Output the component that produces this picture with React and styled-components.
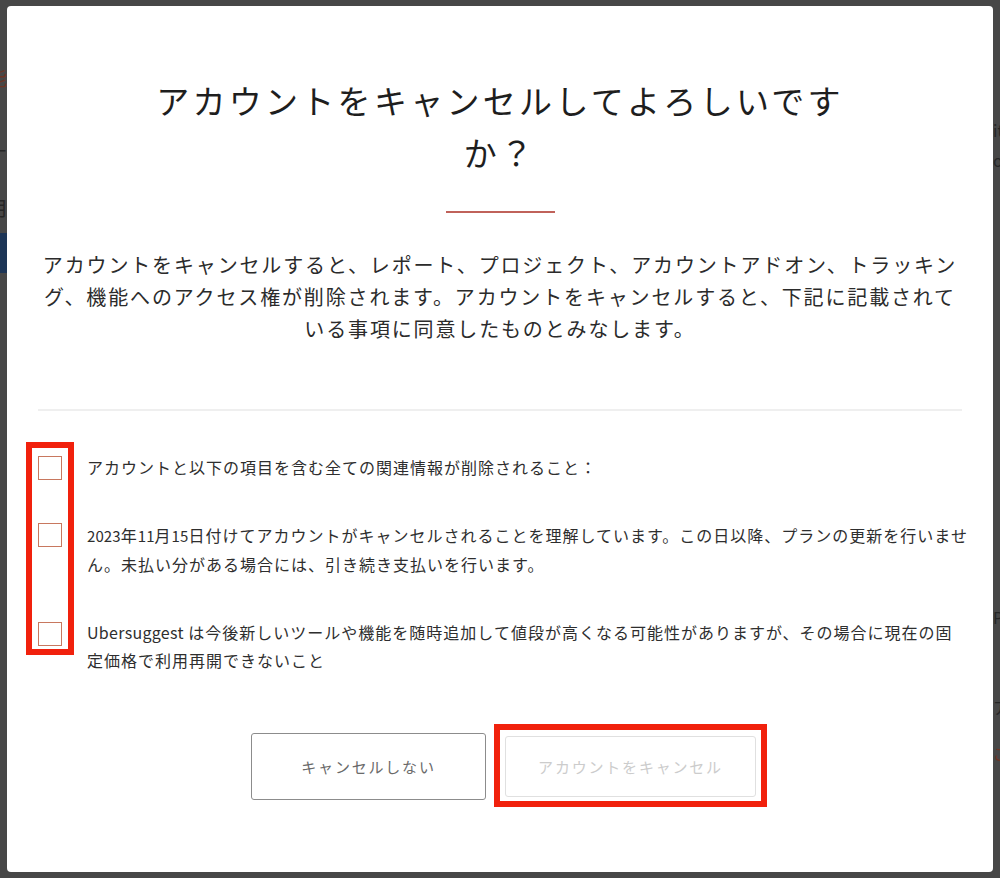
import React from "react";
import styled, { createGlobalStyle } from "styled-components";

const GlobalStyle = createGlobalStyle`
  html, body { margin: 0; padding: 0; background: #474747; }
  body { font-family: "Noto Sans CJK JP", "Noto Sans", sans-serif; }
  * { box-sizing: border-box; }
`;

const Backdrop = styled.div`
  width: 1000px;
  height: 878px;
  overflow: hidden;
  display: grid;
  grid-template-columns: 7px 986px 7px;
  background: #474747;
`;

const EdgeStrip = styled.div`
  height: 878px;
  overflow: hidden;
  display: flex;
  flex-direction: column;
  align-items: ${(p) => (p.$side === "left" ? "flex-end" : "flex-start")};
  padding-top: ${(p) => p.$top}px;
`;

const GhostText = styled.span`
  flex-shrink: 0;
  margin-top: ${(p) => p.$mt || 0}px;
  font-family: "Noto Sans CJK JP", sans-serif;
  font-size: ${(p) => p.$size || 20}px;
  line-height: 1;
  white-space: nowrap;
  color: ${(p) => p.$color || "#262626"};
`;

const GhostBar = styled.div`
  flex-shrink: 0;
  margin-top: ${(p) => p.$mt || 0}px;
  width: 7px;
  height: ${(p) => p.$h}px;
  background: ${(p) => p.$color};
`;

const Modal = styled.div`
  position: relative;
  margin-top: 6px;
  width: 986px;
  height: 866px;
  background: #ffffff;
  border-radius: 4px;
  padding: 68px 31px 0;
  display: flex;
  flex-direction: column;
  align-items: center;
`;

const Title = styled.h1`
  margin: 0;
  max-width: 704px;
  font-family: "Noto Sans CJK JP", sans-serif;
  font-weight: 400;
  font-size: 33px;
  letter-spacing: 3.3px;
  line-height: 52px;
  color: #1e1e1e;
  text-align: center;
`;

const Accent = styled.div`
  margin-top: 33px;
  width: 109px;
  height: 2px;
  background: #c0625a;
`;

const Lead = styled.p`
  margin: 36px 0 0;
  width: 100%;
  font-family: "Noto Sans CJK JP", sans-serif;
  font-size: 20px;
  letter-spacing: 1.85px;
  line-height: 32px;
  color: #2b2b2b;
  text-align: center;
`;

const Divider = styled.div`
  margin-top: 64px;
  width: 100%;
  height: 2px;
  background: #efefef;
`;

const Terms = styled.div`
  margin-top: 42px;
  width: 100%;
  display: flex;
  flex-direction: column;
  gap: 40px;
`;

const Term = styled.label`
  display: flex;
  align-items: flex-start;
  gap: 25px;
`;

const Box = styled.span`
  flex-shrink: 0;
  width: 24px;
  height: 24px;
  margin-top: ${(p) => p.$offset}px;
  border: 1px solid #c8785f;
  background: #fff;
`;

const TermText = styled.span`
  flex: 1;
  white-space: nowrap;
  font-family: "Noto Sans CJK JP", sans-serif;
  font-size: 16px;
  letter-spacing: 1px;
  line-height: 28px;
  color: #2e2e2e;
`;

const Num = styled.span`
  font-size: 15px;
  letter-spacing: 0.1px;
`;

const Brand = styled.span`
  letter-spacing: 0.3px;
`;

const Actions = styled.div`
  margin-top: 59px;
  display: flex;
  align-items: center;
  gap: 19px;
  margin-left: 7px;
`;

const Button = styled.button`
  width: ${(p) => p.$w}px;
  height: ${(p) => p.$h}px;
  background: #fff;
  border-style: solid;
  border-color: ${(p) => (p.$disabled ? "#e0e0e0" : "#8c8c8c")};
  border-width: ${(p) => (p.$disabled ? "1px" : "1.5px")};
  border-radius: 3px;
  font-family: "Noto Sans CJK JP", sans-serif;
  font-size: 15px;
  letter-spacing: 1.8px;
  color: ${(p) => (p.$disabled ? "#cccccc" : "#6a6a6a")};
  padding: 0;
  cursor: ${(p) => (p.$disabled ? "default" : "pointer")};
`;

const Highlight = styled.div`
  position: absolute;
  left: ${(p) => p.$x}px;
  top: ${(p) => p.$y}px;
  width: ${(p) => p.$w}px;
  height: ${(p) => p.$h}px;
  border: 6px solid #f1210d;
  pointer-events: none;
`;

export default function App() {
  return (
    <>
      <GlobalStyle />
      <Backdrop>
        <EdgeStrip $side="left" $top={68}>
          <GhostText $color="#6e3424">能</GhostText>
          <GhostText $mt={54} $size={16}>ー</GhostText>
          <GhostText $mt={40}>用</GhostText>
          <GhostBar $mt={15} $h={40} $color="#1d3556" />
        </EdgeStrip>
        <Modal>
          <Title>アカウントをキャンセルしてよろしいですか？</Title>
          <Accent />
          <Lead>
            アカウントをキャンセルすると、レポート、プロジェクト、アカウントアドオン、トラッキング、機能へのアクセス権が削除されます。アカウントをキャンセルすると、下記に記載されている事項に同意したものとみなします。
          </Lead>
          <Divider />
          <Terms>
            <Term>
              <Box $offset={3} />
              <TermText>アカウントと以下の項目を含む全ての関連情報が削除されること：</TermText>
            </Term>
            <Term>
              <Box $offset={2} />
              <TermText>
                <Num>2023</Num>年<Num>11</Num>月<Num>15</Num>
                日付けてアカウントがキャンセルされることを理解しています。この日以降、プランの更新を行いませ
                <br />
                ん。未払い分がある場合には、引き続き支払いを行います。
              </TermText>
            </Term>
            <Term>
              <Box $offset={4} />
              <TermText>
                <Brand>Ubersuggest</Brand> は今後新しいツールや機能を随時追加して値段が高くなる可能性がありますが、その場合に現在の固
                <br />
                定価格で利用再開できないこと
              </TermText>
            </Term>
          </Terms>
          <Actions>
            <Button $w={235} $h={67}>キャンセルしない</Button>
            <Button $w={251} $h={61} $disabled disabled>
              アカウントをキャンセル
            </Button>
          </Actions>
          <Highlight $x={19} $y={436} $w={48} $h={213} />
          <Highlight $x={487} $y={718} $w={273} $h={83} />
        </Modal>
        <EdgeStrip $side="right" $top={122}>
          <GhostText $size={16}>it</GhostText>
          <GhostText $mt={14} $size={16}>o</GhostText>
          <GhostText $mt={441} $size={16}>P</GhostText>
          <GhostText $mt={74} $size={16}>ア</GhostText>
          <GhostText $mt={30} $size={16} $color="#6e3424">ご</GhostText>
        </EdgeStrip>
      </Backdrop>
    </>
  );
}
